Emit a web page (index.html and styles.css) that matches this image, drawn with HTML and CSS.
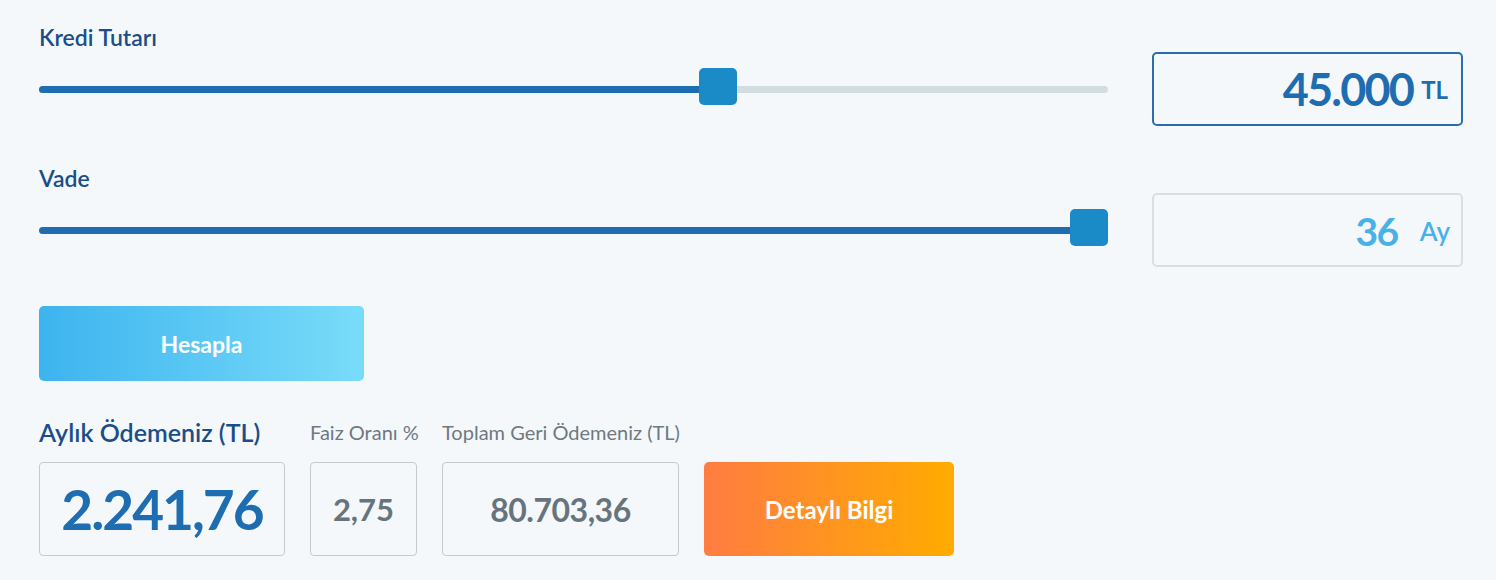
FILE: index.html
```html
<!DOCTYPE html>
<html lang="tr">
<head>
  <meta charset="UTF-8">
  <title>Kredi Hesaplama</title>
  <link rel="stylesheet" href="styles.css">
</head>
<body>
<div class="calc">
  <!--kredi tutarı-->
  <div class="field">
    <div class="field-label">Kredi Tutarı</div>
    <div class="field-row">
      <div class="slider">
        <div class="slider-track"><div class="slider-fill" style="width:679px"></div></div>
        <div class="slider-thumb" style="left:660px"></div>
      </div>
      <div class="value-box value-box--active">
        <span class="value-num">45.000</span><span class="value-unit">TL</span>
      </div>
    </div>
  </div>
  <!--vade-->
  <div class="field">
    <div class="field-label">Vade</div>
    <div class="field-row">
      <div class="slider">
        <div class="slider-track"><div class="slider-fill" style="width:100%"></div></div>
        <div class="slider-thumb" style="left:1031px"></div>
      </div>
      <div class="value-box value-box--light">
        <span class="value-num">36</span><span class="value-unit">Ay</span>
      </div>
    </div>
  </div>
  <button class="btn btn-calc">Hesapla</button>
  <!--sonuçlar-->
  <div class="results">
    <div class="result result--main">
      <div class="result-label">Aylık Ödemeniz (TL)</div>
      <div class="result-box">2.241,76</div>
    </div>
    <div class="result result--rate">
      <div class="result-label">Faiz Oranı %</div>
      <div class="result-box">2,75</div>
    </div>
    <div class="result result--total">
      <div class="result-label">Toplam Geri Ödemeniz (TL)</div>
      <div class="result-box">80.703,36</div>
    </div>
    <a class="btn btn-detail" href="#">Detaylı Bilgi</a>
  </div>
</div>
</body>
</html>
```

FILE: styles.css
```css
* {
  padding: 0;
  margin: 0;
  box-sizing: border-box;
}

body {
  background: #f4f8fb;
  font-family: "Lato", "Noto Sans", sans-serif;
  color: #1a4f8b;
}

.calc {
  padding: 25px 0 0 39px;
  width: 1463px;
}

.field + .field {
  margin-top: 40px;
}

.field-label {
  font-size: 23px;
  line-height: 24px;
  font-weight: 600;
  color: #1b4e88;
}

.field-row {
  display: flex;
  align-items: center;
  gap: 44px;
  margin-top: 3px;
}

.slider {
  flex: 1;
  height: 74px;
  position: relative;
  display: flex;
  align-items: center;
}

.slider-track {
  width: 100%;
  height: 7px;
  margin-top: 1px;
  border-radius: 4px;
  background: #d3dce1;
  overflow: hidden;
}

.slider-fill {
  height: 100%;
  background: #1f6db1;
}

.slider-thumb {
  position: absolute;
  top: 16px;
  width: 38px;
  height: 37px;
  border-radius: 5px;
  background: #1a8bc6;
  cursor: pointer;
}

.value-box {
  width: 311px;
  height: 74px;
  border: 2px solid #d8dfe3;
  border-radius: 5px;
  display: flex;
  align-items: center;
  justify-content: flex-end;
}

.value-box--active {
  border-color: #2a6cad;
  color: #1f6db1;
  padding-right: 13px;
}

.value-box--active .value-num {
  font-size: 45px;
  font-weight: 700;
  letter-spacing: -1.8px;
}

.value-box--active .value-unit {
  font-size: 24px;
  font-weight: 700;
  margin-left: 8px;
}

.value-box--light {
  color: #48b1e7;
  padding-right: 11px;
}

.value-box--light .value-num {
  font-size: 39px;
  font-weight: 700;
  letter-spacing: -1.5px;
  margin-top: 2px;
}

.value-box--light .value-unit {
  font-size: 26px;
  font-weight: 600;
  margin-left: 22px;
  margin-top: 2px;
}

.btn {
  display: flex;
  align-items: center;
  justify-content: center;
  border: 0;
  border-radius: 5px;
  color: #fff;
  font-family: inherit;
  font-weight: 700;
  text-decoration: none;
  cursor: pointer;
}

.btn-calc {
  margin-top: 39px;
  width: 325px;
  height: 75px;
  font-size: 23px;
  background: linear-gradient(to right, #3db4ef, #79dcf9);
}

.results {
  display: flex;
  align-items: flex-end;
  gap: 25px;
  margin-top: 38px;
}

.result {
  flex: none;
}

.result-label {
  font-size: 20px;
  line-height: 26px;
  white-space: nowrap;
  color: #6e7982;
  margin-bottom: 17px;
}

.result--main .result-label {
  font-size: 25px;
  font-weight: 600;
  color: #1b4e88;
}

.result-box {
  height: 94px;
  border: 1px solid #c5cacd;
  border-radius: 4px;
  display: flex;
  align-items: center;
  justify-content: center;
  font-weight: 700;
  color: #68747d;
  font-size: 32px;
}

.result--main {
  width: 246px;
}

.result--main .result-box {
  font-size: 55px;
  letter-spacing: -2px;
  color: #1f6db1;
}

.result--rate {
  width: 107px;
}

.result--rate .result-box {
  font-size: 31px;
}

.result--total {
  width: 237px;
}

.result--total .result-box {
  letter-spacing: -0.5px;
}

.btn-detail {
  flex: none;
  width: 250px;
  height: 94px;
  font-size: 24px;
  background: linear-gradient(to right, #ff7c42, #ffac00);
}
```
